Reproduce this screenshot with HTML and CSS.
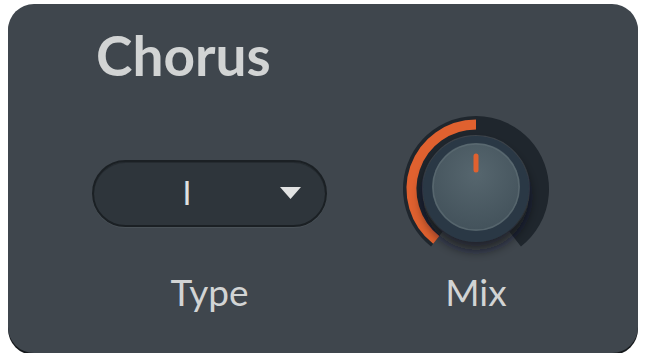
FILE: index.html
```html
<!DOCTYPE html>
<html lang="en">
<head>
    <meta charset="UTF-8">
    <meta name="viewport" content="width=device-width, initial-scale=1.0">
    <title>Chorus</title>
    <link rel="stylesheet" href="styles.css">
</head>
<body>

    <!-- Chorus effect panel -->
    <div class="panel">
        <div class="title">Chorus</div>

        <div class="controls">
            <!-- Type dropdown -->
            <div class="select">
                <span class="select-value">I</span>
                <svg class="select-arrow" width="21" height="12" viewBox="0 0 21 12">
                    <polygon points="0,0 21,0 10.5,12" fill="#e2e3e3"/>
                </svg>
            </div>

            <!-- Mix knob -->
            <svg class="knob" width="150" height="160" viewBox="0 0 150 160">
                <defs>
                    <radialGradient id="cap" cx="50%" cy="35%" r="65%">
                        <stop offset="0" stop-color="#56666e"/>
                        <stop offset="1" stop-color="#43525b"/>
                    </radialGradient>
                    <filter id="drop" x="-40%" y="-40%" width="180%" height="190%">
                        <feDropShadow dx="0" dy="8" stdDeviation="6" flood-color="#15191d" flood-opacity="0.7"/>
                    </filter>
                </defs>
                <path d="M35.90 125.04 A63.5 63.5 0 1 1 114.10 125.04" fill="none" stroke="#1f262d" stroke-width="19"/>
                <path d="M35.29 125.83 A64.5 64.5 0 0 1 75 10.5" fill="none" stroke="#e0612f" stroke-width="10"/>
                <circle cx="75" cy="75" r="53" fill="#2a3845" filter="url(#drop)"/>
                <circle cx="75" cy="73" r="44" fill="url(#cap)"/>
                <circle cx="75" cy="73" r="43" fill="none" stroke="#627178" stroke-width="1.5" stroke-opacity="0.6"/>
                <line x1="75" y1="42" x2="75" y2="56" stroke="#e0612f" stroke-width="5" stroke-linecap="round"/>
            </svg>

            <div class="label">Type</div>
            <div class="label">Mix</div>
        </div>
    </div>

</body>
</html>
```

FILE: styles.css
```css
body {
    margin: 0;
    padding: 0;
    background-color: #ffffff;
    font-family: Lato, "Open Sans", sans-serif;
}
.panel {
    width: 630px;
    height: 349px;
    margin: 4px 0 0 8px;
    padding: 24px 0 0 84px;
    box-sizing: border-box;
    background-color: #3f464d;
    border-radius: 26px;
    box-shadow: 0 2px 0 #16191c;
}
.title {
    font-size: 55px;
    font-weight: 700;
    line-height: 1;
    color: #d2d4d4;
    margin-left: 4px;
}
.controls {
    display: grid;
    grid-template-columns: 235px 150px;
    column-gap: 74px;
    align-items: center;
    margin-top: 29px;
}
.select {
    height: 67px;
    display: flex;
    align-items: center;
    box-sizing: border-box;
    padding-right: 24px;
    background-color: #2e353b;
    border: 2px solid #1b2024;
    border-radius: 34px;
    box-shadow: inset 0 1px 0 #252b30, 0 1px 0 #4a5258;
}
.select-value {
    flex: 1;
    text-align: center;
    font-size: 32px;
    color: #dfe0e0;
    line-height: 1;
}
.select-arrow {
    display: block;
}
.knob {
    display: block;
    margin-top: 2px;
}
.label {
    text-align: center;
    font-size: 37px;
    color: #d2d4d4;
    margin-top: -5px;
}
```
